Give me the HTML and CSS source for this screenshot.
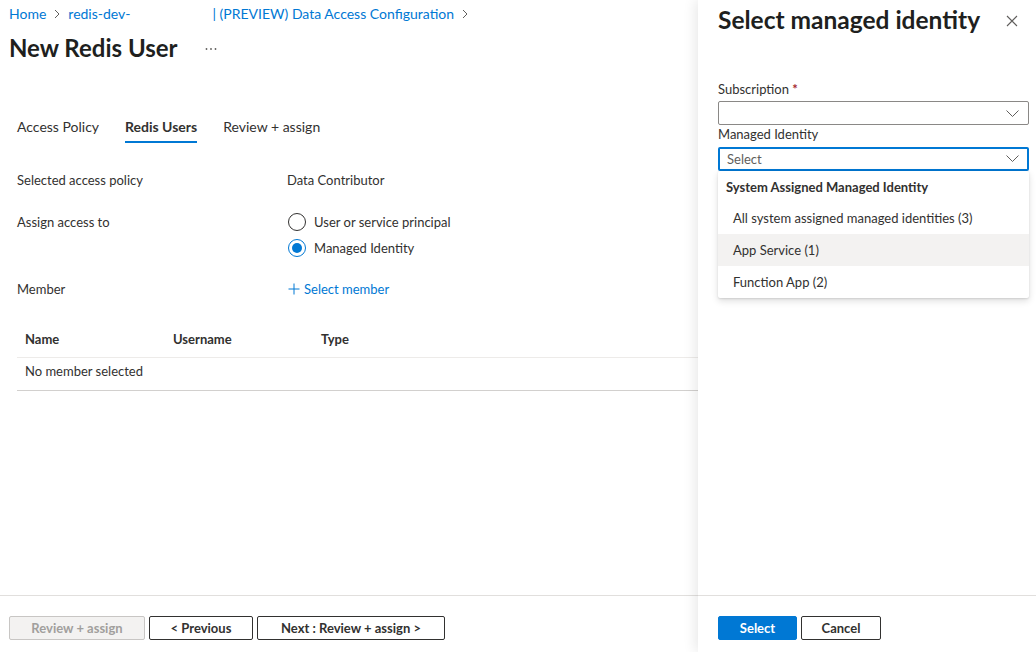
FILE: index.html
```html
<!DOCTYPE html>
<html lang="en">
<head>
<meta charset="utf-8">
<title>New Redis User</title>
<link rel="stylesheet" href="styles.css">
</head>
<body>
<div class="app">
  <main class="page">
    <nav class="crumbs">
      <a class="crumb">Home</a>
      <svg class="chev" width="6" height="10" viewBox="0 0 6 10"><path d="M1 1l4 4-4 4" fill="none" stroke="#605e5c" stroke-width="1"/></svg>
      <a class="crumb">redis-dev-</a>
      <span class="redacted"></span>
      <a class="crumb">| (PREVIEW) Data Access Configuration</a>
      <svg class="chev" width="6" height="10" viewBox="0 0 6 10"><path d="M1 1l4 4-4 4" fill="none" stroke="#605e5c" stroke-width="1"/></svg>
    </nav>
    <header class="title-row">
      <h1 class="title">New Redis User</h1>
      <svg class="more" width="12" height="4" viewBox="0 0 12 4"><circle cx="1.5" cy="2" r="0.9" fill="#605e5c"/><circle cx="6" cy="2" r="0.9" fill="#605e5c"/><circle cx="10.5" cy="2" r="0.9" fill="#605e5c"/></svg>
    </header>

    <div class="tabs">
      <span class="tab">Access Policy</span>
      <span class="tab active">Redis Users</span>
      <span class="tab">Review + assign</span>
    </div>

    <div class="form">
      <div class="row r1">
        <div class="label">Selected access policy</div>
        <div class="value">Data Contributor</div>
      </div>
      <div class="row r2">
        <div class="label">Assign access to</div>
        <div class="value radios">
          <label class="radio"><span class="circle"></span>User or service principal</label>
          <label class="radio checked"><span class="circle"><span class="dot"></span></span>Managed Identity</label>
        </div>
      </div>
      <div class="row r3">
        <div class="label">Member</div>
        <div class="value">
          <a class="add">
            <svg width="12" height="12" viewBox="0 0 12 12"><path d="M6 0.5v11M0.5 6h11" stroke="#0078d4" stroke-width="1" fill="none"/></svg>
            Select member
          </a>
        </div>
      </div>
    </div>

    <table class="members">
      <thead>
        <tr><th class="c1">Name</th><th class="c2">Username</th><th>Type</th></tr>
      </thead>
      <tbody>
        <tr><td colspan="3">No member selected</td></tr>
      </tbody>
    </table>

    <div class="grow"></div>

    <footer class="footer">
      <button class="btn disabled">Review + assign</button>
      <button class="btn prev">&lt; Previous</button>
      <button class="btn next">Next : Review + assign &gt;</button>
    </footer>
  </main>

  <aside class="panel">
    <header class="panel-head">
      <h2 class="panel-title">Select managed identity</h2>
      <svg class="close" width="12" height="12" viewBox="0 0 12 12"><path d="M1 1l10 10M11 1L1 11" stroke="#605e5c" stroke-width="1.1" fill="none"/></svg>
    </header>
    <div class="panel-body">
      <div class="field f1">
        <div class="flabel">Subscription <span class="req">*</span></div>
        <div class="select">
          <span class="placeholder"></span>
          <svg class="dchev" width="13" height="7" viewBox="0 0 13 7"><path d="M0.5 0.5l6 6 6-6" fill="none" stroke="#605e5c" stroke-width="1"/></svg>
        </div>
      </div>
      <div class="field f2">
        <div class="flabel">Managed Identity</div>
        <div class="select focused">
          <span class="placeholder">Select</span>
          <svg class="dchev" width="13" height="7" viewBox="0 0 13 7"><path d="M0.5 0.5l6 6 6-6" fill="none" stroke="#605e5c" stroke-width="1"/></svg>
        </div>
        <div class="menu">
          <div class="menu-head">System Assigned Managed Identity</div>
          <div class="menu-item">All system assigned managed identities (3)</div>
          <div class="menu-item hover">App Service (1)</div>
          <div class="menu-item">Function App (2)</div>
        </div>
      </div>
    </div>
    <footer class="panel-foot">
      <button class="btn primary">Select</button>
      <button class="btn cancel">Cancel</button>
    </footer>
  </aside>
</div>
</body>
</html>
```

FILE: styles.css
```css
* { box-sizing: border-box; }
html, body {
  margin: 0;
  padding: 0;
  background: #ffffff;
}
body {
  font-family: "Lato", "Open Sans", "Liberation Sans", sans-serif;
  font-size: 13px;
  color: #323130;
  width: 1036px;
  height: 652px;
  overflow: hidden;
}
.app {
  display: flex;
  height: 652px;
}

/* ---------- left page ---------- */
.page {
  width: 698px;
  flex: none;
  display: flex;
  flex-direction: column;
  overflow: hidden;
}
.crumbs {
  display: flex;
  align-items: center;
  padding: 5px 0 0 9px;
  height: 23px;
  line-height: 18px;
}
.crumb {
  color: #0078d4;
  font-size: 14px;
  text-decoration: none;
}
.chev { margin: 0 8px 0 8px; }
.redacted { width: 82px; }

.title-row {
  display: flex;
  align-items: center;
  margin-top: 9px;
  padding-left: 9px;
  height: 32px;
}
.title {
  margin: 0;
  font-size: 24px;
  font-weight: 700;
  line-height: 32px;
  color: #201f1e;
}
.more { margin-left: 27px; margin-top: 2px; }

.tabs {
  display: flex;
  gap: 26px;
  margin-top: 54px;
  padding-left: 17px;
}
.tab {
  font-size: 14px;
  line-height: 18px;
  padding-bottom: 5px;
  border-bottom: 2px solid transparent;
}
.tab.active {
  font-weight: 700;
  border-bottom-color: #0078d4;
}

.form {
  padding-left: 17px;
  margin-top: 27px;
}
.row {
  display: flex;
  line-height: 20px;
}
.r2 { margin-top: 22px; }
.r3 { margin-top: 21px; }
.label { width: 270px; flex: none; }
.radios {
  display: flex;
  flex-direction: column;
  gap: 6px;
}
.radio {
  display: flex;
  align-items: center;
  gap: 8px;
  margin-left: 1px;
}
.circle {
  width: 18px;
  height: 18px;
  border-radius: 50%;
  border: 1px solid #323130;
  display: flex;
  align-items: center;
  justify-content: center;
}
.radio.checked .circle { border-color: #0078d4; }
.dot {
  width: 10px;
  height: 10px;
  border-radius: 50%;
  background: #0078d4;
}
.add {
  display: flex;
  align-items: center;
  gap: 4px;
  color: #0078d4;
  margin-left: 1px;
}

.members {
  margin: 22px 0 0 17px;
  width: 681px;
  border-collapse: collapse;
  text-align: left;
}
.members th {
  font-weight: 700;
  height: 36px;
  padding: 0 8px;
  line-height: 20px;
  border-bottom: 1px solid #edebe9;
  vertical-align: middle;
}
.members th.c1, .members th.c2 { width: 148px; }
.members td {
  height: 33px;
  padding: 0 8px 5px;
  border-bottom: 1px solid #d2d0ce;
}
.grow { flex: 1; }

.footer {
  border-top: 1px solid #e1dfdd;
  padding: 20px 0 12px 9px;
  display: flex;
  gap: 4px;
}
.btn {
  font-family: inherit;
  font-size: 13px;
  font-weight: 700;
  height: 24px;
  padding: 0;
  border-radius: 2px;
  border: 1px solid #323130;
  background: #ffffff;
  color: #323130;
}
.btn.disabled {
  width: 136px;
  background: #f3f2f1;
  border-color: #c8c6c4;
  color: #a19f9d;
}
.btn.prev { width: 104px; }
.btn.next { width: 188px; }

/* ---------- right panel ---------- */
.panel {
  position: relative;
  z-index: 1;
  width: 338px;
  flex: none;
  display: flex;
  flex-direction: column;
  background: #ffffff;
  box-shadow: -3px 0 12px rgba(0, 0, 0, 0.09);
}
.panel-head {
  display: flex;
  align-items: center;
  justify-content: space-between;
  padding: 6px 18px 0 20px;
  height: 34px;
}
.panel-title {
  margin: 0;
  font-size: 24.5px;
  font-weight: 700;
  line-height: 28px;
  color: #201f1e;
}
.close { margin-top: 1px; }
.panel-body {
  flex: 1;
  padding: 46px 7px 0 20px;
}
.flabel {
  line-height: 18px;
}
.req { color: #a4262c; font-weight: 700; }
.select {
  margin-top: 3px;
  height: 24px;
  border: 1px solid #8a8886;
  border-radius: 2px;
  display: flex;
  align-items: center;
  justify-content: space-between;
  padding: 0 9px 0 8px;
}
.select.focused {
  border: 2px solid #0078d4;
  padding: 0 8px 1px 7px;
}
.placeholder { color: #605e5c; }
.f2 .select { margin-top: 4px; }
.menu {
  margin-top: 0;
  background: #ffffff;
  border-radius: 2px;
  box-shadow: 0 3px 7px rgba(0, 0, 0, 0.13), 0 0.6px 2px rgba(0, 0, 0, 0.11);
}
.menu-head {
  height: 31px;
  line-height: 32px;
  padding-left: 8px;
  font-weight: 700;
  color: #323130;
}
.menu-item {
  height: 32px;
  line-height: 32px;
  padding-left: 15px;
}
.menu-item.hover { background: #f3f2f1; }

.panel-foot {
  border-top: 1px solid #e1dfdd;
  padding: 20px 0 12px 20px;
  display: flex;
  gap: 4px;
}
.btn.primary {
  width: 79px;
  background: #0078d4;
  border-color: #0078d4;
  color: #ffffff;
}
.btn.cancel { width: 80px; }
```
